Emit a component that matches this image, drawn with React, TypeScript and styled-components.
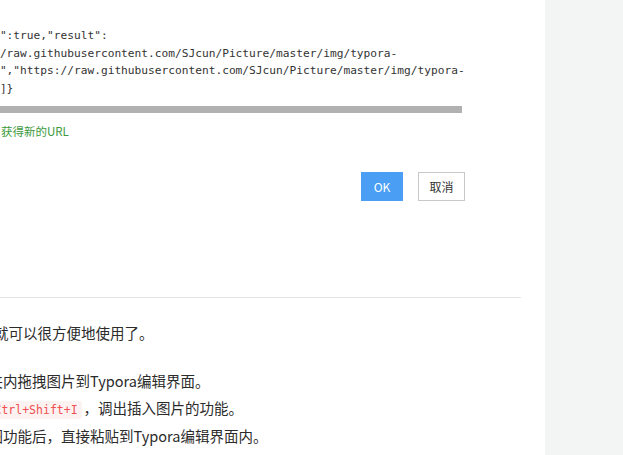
import React from "react";
import styled, { createGlobalStyle } from "styled-components";

const GlobalStyle = createGlobalStyle`
  html, body {
    margin: 0;
    padding: 0;
    background: #fff;
    overflow: hidden;
  }
`;

const StyledPage = styled.div`
  display: flex;
  height: 455px;
  font-family: "Noto Sans CJK SC", "Liberation Sans", sans-serif;
  color: #2b2b2b;
`;

const StyledMain = styled.main`
  flex: 1;
  overflow: hidden;
  background: #fff;
`;

const StyledSide = styled.aside`
  width: 78px;
  background: #f3f4f4;
`;

// the dialog screenshot embedded in the document
const StyledShot = styled.div`
  width: 520px;
  margin-left: -54px;
  padding-top: 27px;
`;

const StyledMono = styled.pre`
  margin: 0;
  font-family: "DejaVu Sans Mono", monospace;
  font-size: 11.2px;
  line-height: 17.5px;
  color: #333;
  white-space: pre;
`;

const StyledBar = styled.div`
  width: 516px;
  height: 7px;
  margin-top: 9px;
  background: #b1b1b1;
`;

const StyledHint = styled.div`
  margin-top: 10px;
  padding-left: 55px;
  font-size: 11.5px;
  line-height: 17px;
  color: #3c9a3c;
`;

const StyledActions = styled.div`
  display: flex;
  justify-content: flex-end;
  gap: 15px;
  margin-top: 32px;
  padding-right: 1px;
`;

const StyledButton = styled.button<{ $primary?: boolean }>`
  height: 29px;
  padding: 0;
  width: ${(p) => (p.$primary ? "42px" : "47px")};
  font-family: "Noto Sans CJK SC", "Liberation Sans", sans-serif;
  font-size: 12px;
  border: 1px solid ${(p) => (p.$primary ? "#4a9ff5" : "#c8c8c8")};
  background: ${(p) => (p.$primary ? "#4a9ff5" : "#fff")};
  color: ${(p) => (p.$primary ? "#fff" : "#333")};
`;

const StyledDoc = styled.article`
  width: 599.5px;
  margin-left: -78.5px;
  margin-top: 96px;
`;

const StyledRule = styled.hr`
  margin: 0 0 22px;
  border: none;
  border-top: 1px solid #e4e4e4;
`;

const StyledPara = styled.p`
  margin: 0;
  font-size: 14.5px;
  line-height: 26.5px;
`;

const StyledList = styled.ul`
  margin: 21.5px 0 0;
  padding-left: 23.5px;
  list-style: none;
  font-size: 14.5px;
  line-height: 26.5px;
`;

const StyledCode = styled.code`
  margin: 0 2px;
  padding: 2px 4px;
  font-family: "DejaVu Sans Mono", monospace;
  font-size: 11.5px;
  color: #f0504f;
  background: #fdf2f2;
  border-radius: 2px;
`;

export default function App() {
  return (
    <>
      <GlobalStyle />
      <StyledPage>
        <StyledMain>
          <StyledShot>
            <StyledMono>
              {`"success":true,"result":
"https://raw.githubusercontent.com/SJcun/Picture/master/img/typora-
5421.png","https://raw.githubusercontent.com/SJcun/Picture/master/img/typora-
345.png"]}`}
            </StyledMono>
            <StyledBar />
            <StyledHint>获得新的URL</StyledHint>
            <StyledActions>
              <StyledButton $primary>OK</StyledButton>
              <StyledButton>取消</StyledButton>
            </StyledActions>
          </StyledShot>
          <StyledDoc>
            <StyledRule />
            <StyledPara>配置好之后就可以很方便地使用了。</StyledPara>
            <StyledList>
              <li>从文件夹内拖拽图片到Typora编辑界面。</li>
              <li>
                快捷键<StyledCode>Ctrl+Shift+I</StyledCode>，调出插入图片的功能。
              </li>
              <li>使用截图功能后，直接粘贴到Typora编辑界面内。</li>
            </StyledList>
          </StyledDoc>
        </StyledMain>
        <StyledSide />
      </StyledPage>
    </>
  );
}
